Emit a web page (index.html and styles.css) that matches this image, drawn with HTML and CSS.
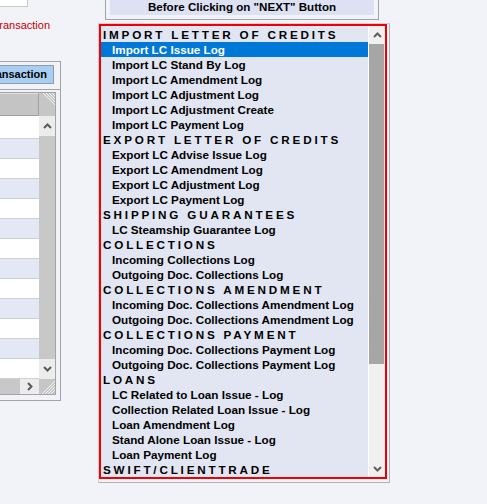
FILE: index.html
```html
<!DOCTYPE html>
<html>
<head>
<meta charset="utf-8">
<link rel="stylesheet" href="styles.css">
</head>
<body>
<div class="page">
  <div class="left">
    <div class="topbox"></div>
    <div class="redtext"><span>Transaction</span></div>
    <div class="panel">
      <div class="btn">Transaction</div>
      <div class="sep"></div>
      <div class="grid">
        <div class="ghead"></div>
        <div class="gcorner">
          <svg width="16" height="23" viewBox="0 0 16 23"><g stroke="#f4f4f4" stroke-width="1"><line x1="4" y1="0" x2="16" y2="12"/><line x1="7" y1="0" x2="16" y2="9"/><line x1="10" y1="0" x2="16" y2="6"/><line x1="13" y1="0" x2="16" y2="3"/></g></svg>
        </div>
        <div class="grows">
          <div class="grow"></div><div class="grow"></div><div class="grow"></div><div class="grow"></div>
          <div class="grow"></div><div class="grow"></div><div class="grow"></div><div class="grow"></div>
          <div class="grow"></div><div class="grow"></div><div class="grow"></div><div class="grow"></div>
          <div class="grow"></div>
        </div>
        <div class="vscroll">
          <div class="vbtn"><svg width="9" height="6" viewBox="0 0 9 6"><polyline points="1,5 4.5,1.5 8,5" fill="none" stroke="#5a5a5a" stroke-width="2"/></svg></div>
          <div class="vtrack"></div>
          <div class="vbtn"><svg width="9" height="6" viewBox="0 0 9 6"><polyline points="1,1 4.5,4.5 8,1" fill="none" stroke="#5a5a5a" stroke-width="2"/></svg></div>
        </div>
        <div class="hscroll">
          <div class="htrack"></div>
          <div class="hbtn"><svg width="6" height="9" viewBox="0 0 6 9"><polyline points="1,1 4.5,4.5 1,8" fill="none" stroke="#5a5a5a" stroke-width="2"/></svg></div>
        </div>
        <div class="gcorner2">
          <svg width="16" height="15" viewBox="0 0 16 15"><g stroke="#f4f4f4" stroke-width="1"><line x1="16" y1="2" x2="3" y2="15"/><line x1="16" y1="5" x2="6" y2="15"/><line x1="16" y1="8" x2="9" y2="15"/><line x1="16" y1="11" x2="12" y2="15"/></g></svg>
        </div>
      </div>
    </div>
  </div>
  <div class="right">
    <div class="notice"><div class="notice-fill">Before Clicking on "NEXT" Button</div></div>
    <div class="listframe">
      <div class="listbox">
        <ul class="list">
          <li class="hdr">IMPORT LETTER OF CREDITS</li>
          <li class="item sel">Import LC Issue Log</li>
          <li class="item">Import LC Stand By Log</li>
          <li class="item">Import LC Amendment Log</li>
          <li class="item">Import LC Adjustment Log</li>
          <li class="item">Import LC Adjustment Create</li>
          <li class="item">Import LC Payment Log</li>
          <li class="hdr">EXPORT LETTER OF CREDITS</li>
          <li class="item">Export LC Advise Issue Log</li>
          <li class="item">Export LC Amendment Log</li>
          <li class="item">Export LC Adjustment Log</li>
          <li class="item">Export LC Payment Log</li>
          <li class="hdr">SHIPPING GUARANTEES</li>
          <li class="item">LC Steamship Guarantee Log</li>
          <li class="hdr">COLLECTIONS</li>
          <li class="item">Incoming Collections Log</li>
          <li class="item">Outgoing Doc. Collections Log</li>
          <li class="hdr">COLLECTIONS AMENDMENT</li>
          <li class="item">Incoming Doc. Collections Amendment Log</li>
          <li class="item">Outgoing Doc. Collections Amendment Log</li>
          <li class="hdr">COLLECTIONS PAYMENT</li>
          <li class="item">Incoming Doc. Collections Payment Log</li>
          <li class="item">Outgoing Doc. Collections Payment Log</li>
          <li class="hdr">LOANS</li>
          <li class="item">LC Related to Loan Issue - Log</li>
          <li class="item">Collection Related Loan Issue - Log</li>
          <li class="item">Loan Amendment Log</li>
          <li class="item">Stand Alone Loan Issue - Log</li>
          <li class="item">Loan Payment Log</li>
          <li class="hdr">SWIFT/CLIENTTRADE</li>
        </ul>
        <div class="lscroll">
          <div class="lbtn up"><svg width="9" height="6" viewBox="0 0 9 6"><polyline points="1,5 4.5,1.5 8,5" fill="none" stroke="#606060" stroke-width="2"/></svg></div>
          <div class="lthumb"></div>
          <div class="ltrack"></div>
          <div class="lbtn down"><svg width="9" height="6" viewBox="0 0 9 6"><polyline points="1,1 4.5,4.5 8,1" fill="none" stroke="#606060" stroke-width="2"/></svg></div>
        </div>
      </div>
    </div>
  </div>
</div>
</body>
</html>
```
FILE: styles.css
```css
html, body {
  margin: 0;
  padding: 0;
  height: 504px;
  overflow: hidden;
  background: #f2f3f8;
}
body {
  font-family: "Liberation Sans", Arial, sans-serif;
  color: #000;
}
.page {
  display: flex;
  align-items: flex-start;
}

/* ---------- left (clipped) column ---------- */
.left {
  width: 61px;
  flex: none;
  display: flex;
  flex-direction: column;
  align-items: flex-end;
  overflow: hidden;
  height: 504px;
}
.topbox {
  align-self: flex-start;
  width: 28px;
  height: 17px;
  margin-top: -10px;
  box-sizing: border-box;
  border: 1px solid #c8c8c8;
  border-left: 0;
  background: #fff;
  flex: none;
}
.redtext {
  display: flex;
  justify-content: flex-end;
  margin: 11px 11px 0 0;
  font-size: 11px;
  line-height: 14px;
  color: #c80000;
  white-space: nowrap;
  flex: none;
}
.panel {
  width: 61px;
  flex: none;
  box-sizing: border-box;
  margin-top: 29px;
  border: 1px solid #a4a4a4;
  border-left: 0;
  padding: 3px 0 5px 0;
  display: flex;
  flex-direction: column;
  align-items: flex-end;
}
.btn {
  flex: none;
  height: 19px;
  box-sizing: border-box;
  margin-right: 6px;
  padding: 0 6px 0 8px;
  border: 1px solid #8e9cb2;
  background: #a9cef3;
  font-weight: bold;
  font-size: 11px;
  line-height: 17px;
  white-space: nowrap;
}
.sep {
  align-self: stretch;
  height: 1px;
  background: #a4a4a4;
  margin: 5px 0 2px 0;
  flex: none;
}
.grid {
  flex: none;
  width: 80px;
  margin-right: 4px;
  border: 1px solid #a4a4a4;
  display: grid;
  grid-template-columns: 1fr 16px;
  grid-template-rows: 23px 263px 15px;
  background: #fff;
}
.ghead {
  background: #c4c4c4;
  box-sizing: border-box;
  border: 1px solid #a0a0a0;
  border-top-color: #e2e2e2;
  border-left: 0;
}
.gcorner, .gcorner2 {
  background: #c6c6c6;
  line-height: 0;
}
.gcorner svg, .gcorner2 svg { display: block; }
.grows {
  display: flex;
  flex-direction: column;
}
.grow {
  height: 19px;
  border-bottom: 1px solid #cdd1da;
  background: #fff;
}
.grow:first-child { height: 22px; }
.grow:nth-child(even) { background: #e4e8f5; }
.vscroll {
  background: #c8c8c8;
  display: flex;
  flex-direction: column;
}
.vbtn {
  height: 20px;
  background: #ececec;
  display: flex;
  align-items: center;
  justify-content: center;
}
.vtrack { flex: 1; }
.hscroll {
  background: #c8c8c8;
  display: flex;
}
.htrack { flex: 1; }
.hbtn {
  width: 19px;
  background: #ececec;
  display: flex;
  align-items: center;
  justify-content: center;
}

/* ---------- right column ---------- */
.right {
  flex: none;
  width: 292px;
  margin-left: 37px;
}
.notice {
  margin: -7px 11px 0 7px;
  border: 1px solid #a4a4a4;
  padding: 4px;
}
.notice-fill {
  height: 17px;
  background: #dce1f3;
  font-weight: bold;
  font-size: 11.6px;
  line-height: 17px;
  text-align: center;
  white-space: nowrap;
}
.listframe {
  margin-top: 3px;
  border: 1px solid #b4b4b4;
  border-top-color: #cfd0d6;
  border-left-color: #cfd0d6;
  padding: 0 2px 3px 0;
}
.listbox {
  border: 2px solid #f00000;
  display: flex;
  height: 451px;
}
.list {
  flex: 1;
  margin: 0;
  padding: 1px 0 0 0;
  list-style: none;
  background: #e2e6f3;
  border-right: 1px solid #fff;
  overflow: hidden;
}
.list li {
  height: 15px;
  line-height: 15px;
  font-size: 11.7px;
  font-weight: bold;
  white-space: nowrap;
}
.hdr {
  padding-left: 2px;
  letter-spacing: 2.8px;
}
.item {
  padding-left: 11px;
}
.sel {
  background: #0078d7;
  color: #fff;
}
.lscroll {
  width: 16px;
  background: #f0f0f0;
  display: flex;
  flex-direction: column;
}
.lbtn {
  display: flex;
  align-items: center;
  justify-content: center;
}
.lbtn.up { height: 18px; }
.lbtn.down { height: 17px; }
.lthumb {
  height: 320px;
  margin-right: 1px;
  background: #a6a6a6;
}
.ltrack { flex: 1; }
```
